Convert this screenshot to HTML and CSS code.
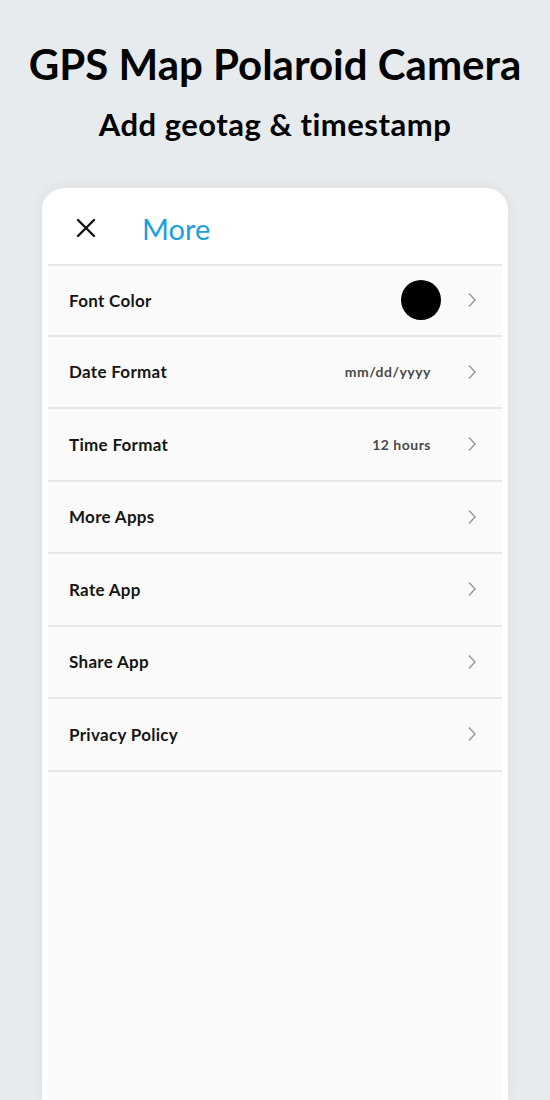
FILE: index.html
```html
<!DOCTYPE html>
<html lang="en">
<head>
    <meta charset="UTF-8">
    <meta name="viewport" content="width=device-width, initial-scale=1.0">
    <title>GPS Map Polaroid Camera</title>
    <link rel="stylesheet" href="styles.css">
</head>
<body>
    <div class="hero">
        <h1>GPS Map Polaroid Camera</h1>
        <h2>Add geotag &amp; timestamp</h2>
    </div>

    <div class="phone">
        <div class="phone-head">
            <svg class="close" width="20" height="20" viewBox="0 0 20 20">
                <path d="M2 2 L18 18 M18 2 L2 18" stroke="#111" stroke-width="2.4" stroke-linecap="round" fill="none"/>
            </svg>
            <span class="head-title">More</span>
        </div>

        <div class="menu">
            <div class="menu-row">
                <span class="label">Font Color</span>
                <span class="swatch"></span>
                <svg class="chevron" width="10" height="16" viewBox="0 0 10 16"><path d="M2 1.5 L8 8 L2 14.5" stroke="#9a9a9a" stroke-width="1.5" fill="none"/></svg>
            </div>
            <div class="menu-row">
                <span class="label">Date Format</span>
                <span class="value">mm/dd/yyyy</span>
                <svg class="chevron" width="10" height="16" viewBox="0 0 10 16"><path d="M2 1.5 L8 8 L2 14.5" stroke="#9a9a9a" stroke-width="1.5" fill="none"/></svg>
            </div>
            <div class="menu-row">
                <span class="label">Time Format</span>
                <span class="value">12 hours</span>
                <svg class="chevron" width="10" height="16" viewBox="0 0 10 16"><path d="M2 1.5 L8 8 L2 14.5" stroke="#9a9a9a" stroke-width="1.5" fill="none"/></svg>
            </div>
            <div class="menu-row">
                <span class="label">More Apps</span>
                <svg class="chevron" width="10" height="16" viewBox="0 0 10 16"><path d="M2 1.5 L8 8 L2 14.5" stroke="#9a9a9a" stroke-width="1.5" fill="none"/></svg>
            </div>
            <div class="menu-row">
                <span class="label">Rate App</span>
                <svg class="chevron" width="10" height="16" viewBox="0 0 10 16"><path d="M2 1.5 L8 8 L2 14.5" stroke="#9a9a9a" stroke-width="1.5" fill="none"/></svg>
            </div>
            <div class="menu-row">
                <span class="label">Share App</span>
                <svg class="chevron" width="10" height="16" viewBox="0 0 10 16"><path d="M2 1.5 L8 8 L2 14.5" stroke="#9a9a9a" stroke-width="1.5" fill="none"/></svg>
            </div>
            <div class="menu-row">
                <span class="label">Privacy Policy</span>
                <svg class="chevron" width="10" height="16" viewBox="0 0 10 16"><path d="M2 1.5 L8 8 L2 14.5" stroke="#9a9a9a" stroke-width="1.5" fill="none"/></svg>
            </div>
        </div>
    </div>
</body>
</html>
```

FILE: styles.css
```css
body {
    margin: 0;
    background-color: #e8ebee;
    font-family: Lato, "Open Sans", sans-serif;
    color: #111;
}

.hero {
    text-align: center;
    padding-top: 38px;
    height: 150px;
}

.hero h1 {
    margin: 0;
    font-size: 42px;
    font-weight: 700;
    line-height: 52px;
    color: #000;
}

.hero h2 {
    margin: 14px 0 0;
    font-size: 31px;
    font-weight: 700;
    line-height: 40px;
    letter-spacing: 0.5px;
    color: #000;
}

.phone {
    margin: 0 42px;
    padding: 0 6px;
    height: 912px;
    display: flex;
    flex-direction: column;
    background-color: #fff;
    border-radius: 22px 22px 0 0;
    box-shadow: 0 0 14px rgba(0, 0, 0, 0.06);
}

.phone-head {
    height: 76px;
    box-sizing: border-box;
    padding: 4px 0 0 28px;
    display: flex;
    align-items: center;
}

.close {
    margin-right: 46px;
}

.head-title {
    font-size: 29px;
    font-weight: 400;
    color: #1a9fe3;
}

.menu {
    flex: 1;
    background-color: #fafafa;
    border-top: 2px solid #e7e7e7;
}

.menu-row {
    box-sizing: border-box;
    height: 72.5px;
    border-bottom: 2px solid #e7e7e7;
    display: flex;
    align-items: center;
    padding: 0 25px 0 21px;
}

.menu-row:first-child {
    height: 70.5px;
}

.label {
    flex: 1;
    font-size: 17px;
    font-weight: 700;
    letter-spacing: 0.3px;
    color: #161616;
}

.value {
    font-size: 14px;
    font-weight: 700;
    letter-spacing: 0.5px;
    color: #4a4a4a;
    margin-right: 36px;
}

.swatch {
    width: 40px;
    height: 40px;
    border-radius: 50%;
    background-color: #000;
    margin-right: 26px;
}

.chevron {
    display: block;
}
```
